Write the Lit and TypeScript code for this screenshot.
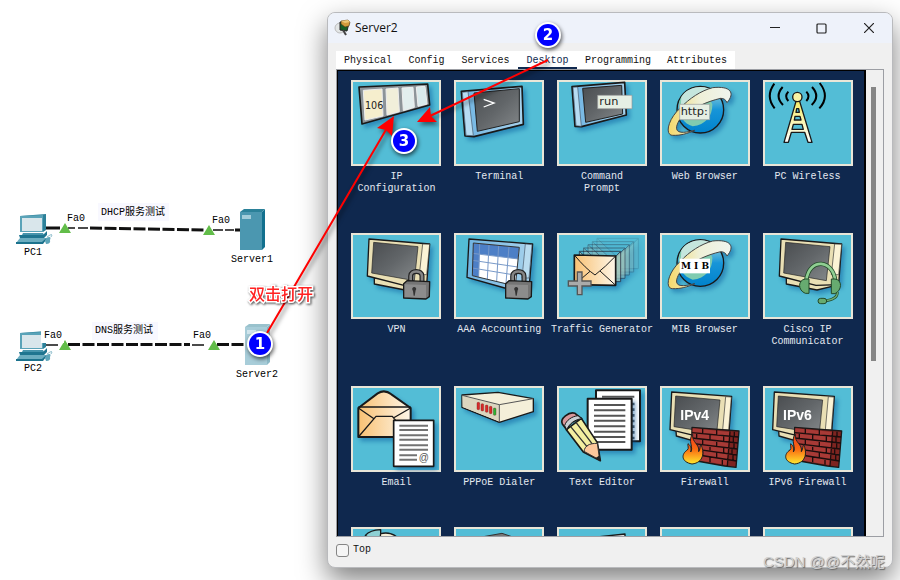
import { LitElement, html, svg, css, nothing } from "lit";
import { customElement, state } from "lit/decorators.js";
import { classMap } from "lit/directives/class-map.js";

type Art = ReturnType<typeof svg>;
interface App { name: string[]; box: string; art: Art | typeof nothing }

const monitorBeige = svg`
  <path class="ink w4 beige" d="M133 160 L133 178 L225 196 L270 185 L262 160Z"/>
  <path class="ink w4 beige" d="M117 43 L299 58 L290 180 L222 182 L112 154Z"/>
  <path fill="#fbf3d6" stroke="#333" stroke-width="2" d="M278 58 L299 59 L290 150 L268 150Z"/>
  <path fill="url(#screen)" stroke="#222" stroke-width="2" d="M131 53 L264 66 L253 168 L125 145Z"/>`;

const padlock = svg`
  <path fill="none" stroke="#222" stroke-width="15" d="M242 178 V154 C242 136 276 136 276 154 V178"/>
  <path fill="none" stroke="#858585" stroke-width="8" d="M242 178 V154 C242 136 276 136 276 154 V178"/>
  <path fill="#757575" class="ink w4" d="M221 177 L231 168 L299 171 L298 216 L288 223 L221 220Z"/>
  <path fill="#8c8c8c" d="M224 179 L288 181 L288 220 L224 217Z"/>
  <path fill="#333" d="M247 195 a6 6 0 1 1 10 2 l-3 16 l-3 0 l-2 -14z"/>`;

const planet = svg`
  <circle cx="463" cy="122" r="70" fill="url(#sea)" class="ink w4"/>
  <path fill="#7fcbb0" d="M410 78 C430 54 480 46 505 70 C490 78 492 95 499 105 C500 140 480 168 440 172 C400 160 385 110 410 78Z"/>
  <path fill="#dcefec" opacity=".75" d="M406 84 C425 50 480 46 500 66 C470 80 440 95 404 118Z"/>
  <path fill="url(#ring)" stroke="#444" stroke-width="3" stroke-linejoin="round" d="M402 118 C366 150 355 199 380 199 C402 200 425 194 446 184 C412 193 388 194 392 172 C398 152 404 148 412 142 C440 118 480 98 524 88 Q538 88 543 101 C568 72 555 50 500 56 C465 65 430 88 402 118Z"/>`;

const wall = (dx: number) => svg`<g transform=${`translate(${dx} 0)`}>
  <path fill="#7d2420" class="ink w4" d="M438 142 L579 153 L570 262 L536 258 L436 240Z"/>
  <path fill="#a83a36" d="M440 145 L552 156 L546 256 L438 238Z"/>
  <path fill="none" stroke="#1c0d0d" stroke-width="4" d="M438 158 L577 171 M438 174 L576 189 M438 190 L574 207 M438 206 L573 225 M438 222 L572 243 M552 154 L544 258 M470 146 V160 M512 150 V164 M452 160 V174 M492 164 V178 M533 167 V183 M470 178 V192 M512 182 V198 M492 197 V211 M533 202 V218 M470 210 V225 M512 216 V232 M492 230 V247 M529 236 V254 M565 155 V168 M562 172 V188 M564 190 V205 M558 208 V222 M561 226 V241"/>
  <path fill="url(#fire)" stroke="#222" stroke-width="3" d="M438 252 C405 246 405 222 424 210 C430 204 424 198 426 191 C436 198 436 208 434 216 C444 205 424 180 440 163 C437 188 462 192 458 215 C464 206 461 200 465 194 C475 216 474 248 438 252Z"/>
</g>`;

const firewall = (dx: number, label: string) => svg`<g class="cast">
  <g transform=${`translate(${dx} 0)`}>
    <path class="ink w4 beige" d="M390 150 L391 168 L440 182 L500 170Z"/>
    <path class="ink w4 beige" d="M377 36 L557 49 L548 170 L480 175 L372 149Z"/>
    <path fill="#fbf3d6" stroke="#333" stroke-width="2" d="M539 50 L556 51 L548 150 L530 150Z"/>
    <path fill="url(#screen)" stroke="#222" stroke-width="2" d="M389 48 L522 60 L512 160 L384 140Z"/>
    <text x="403" y="119" class="fw">${label}</text>
  </g></g>${wall(dx)}`;

const apps: App[] = [
  { name: ["IP", "Configuration"], box: "63 33 270 258", art: svg`
    <g class="cast"><path fill="#8d9499" class="ink w5" d="M87 54 L293 45 L299 108 L96 165Z"/>
    <path fill="#f6eecd" stroke="#eee" stroke-width="3" d="M100 64 L156 60 L159 141 L105 153Z"/>
    <path fill="#f1efda" stroke="#eee" stroke-width="3" d="M168 60 L204 57 L208 128 L171 138Z"/>
    <path fill="#e2eeee" stroke="#eee" stroke-width="3" d="M216 57 L249 55 L253 115 L220 125Z"/>
    <path fill="#d9eaec" stroke="#eee" stroke-width="3" d="M259 54 L285 52 L291 105 L264 112Z"/></g>
    <text x="105" y="121" class="num">106</text>` },
  { name: ["Terminal"], box: "372 33 270 258", art: svg`
    <g class="cast"><path fill="url(#steel)" class="ink w5" d="M394 67 L576 52 L580 166 L432 203 L405 201Z"/>
    <path fill="#b6dcf2" stroke="#456" stroke-width="2" d="M397 70 L414 68 L430 200 L408 199Z"/>
    <path fill="url(#screen)" stroke="#222" stroke-width="3" d="M432 72 L568 59 L568 158 L442 187Z"/></g>
    <path fill="none" stroke="#fff" stroke-width="4" d="M461 91 L492 102 L461 114"/>` },
  { name: ["Command", "Prompt"], box: "34 33 270 258", art: svg`
    <g class="cast"><path fill="url(#steel)" class="ink w5" d="M79 53 L237 40 L242 138 L108 173 L88 172Z"/>
    <path fill="#b6dcf2" stroke="#456" stroke-width="2" d="M82 55 L96 54 L107 172 L91 170Z"/>
    <path fill="url(#screen)" stroke="#222" stroke-width="3" d="M111 58 L228 49 L231 135 L120 160Z"/></g>
    <path fill="#e6efe4" stroke="#999" stroke-width="2" d="M156 79 H259 V119 H156Z"/>
    <text x="161" y="107" class="run">run</text>` },
  { name: ["Web Browser"], box: "342 33 270 258", art: svg`
    <g class="cast">${planet}</g>
    <path fill="#e6efe4" stroke="#999" stroke-width="2" d="M401 106 H491 V152 H401Z"/>
    <text x="404" y="137" class="run">http:</text>` },
  { name: ["PC Wireless"], box: "35 33 270 258", art: svg`
    <g fill="none" stroke="#000" stroke-width="6"><path d="M69 44 Q41 82 70 118 M94 54 Q69 82 95 108 M111 68 Q98 82 111 96 M205 42 Q237 82 204 118 M182 54 Q208 82 181 108 M165 68 Q178 82 165 96"/></g>
    <path fill="url(#mast)" fill-rule="evenodd" class="ink w4" d="M134 97 H145 L182 220 H170 L160 190 H120 L111 220 H98Z M136 119 L134 130 H144 L142 119Z M131 142 L129 153 H149 L146 142Z M126 166 L122 181 H156 L152 166Z"/>
    <circle cx="138" cy="84" r="14" fill="#f8f3a4" class="ink w4"/>` },
  { name: ["VPN"], box: "63 25 270 258", art: svg`<g class="cast">${monitorBeige}</g>${padlock}` },
  { name: ["AAA Accounting"], box: "372 25 270 258", art: svg`
    <g class="cast"><path fill="url(#steel)" class="ink w4" d="M417 43 L608 58 L598 182 L524 190 L411 158Z"/>
    <path fill="#b9dcf0" stroke="#456" stroke-width="2" d="M586 58 L606 60 L597 160 L576 160Z"/></g>
    <path fill="#fff" d="M430 55 L568 68 L556 182 L427 153Z"/>
    <path fill="#4d7fc6" d="M430 55 L568 68 L563 103 L449 88 L446 157 L427 153Z"/>
    <path fill="none" stroke="#7899c8" stroke-width="3" d="M427 86 L566 103 M427 107 L563 127 M427 130 L560 152 M449 57 L446 157 M477 60 L472 163 M506 62 L500 169 M537 65 L528 175"/>
    <path fill="none" stroke="#333" stroke-width="3" d="M430 55 L568 68 L556 184 L427 153Z"/>
    <g transform="translate(306 0)">${padlock}</g>` },
  { name: ["Traffic Generator"], box: "34 25 270 258", art: svg`
    <g class="cast">
    ${[[68, -50, .15], [54, -40, .25], [41, -31, .38], [28, -21, .5], [15, -11, .7]].map(([x, y, o]) => svg`<path opacity=${o} fill="#a9cabc" stroke="#223" stroke-width="3" transform=${`translate(${x} ${y})`} d="M86 91 H210 V182 H86Z M86 91 L150 151 L210 91"/>`)}
    <path fill="url(#paper)" class="ink w5" d="M86 91 L210 94 V182 L86 180Z"/>
    <path fill="none" class="ink w3" d="M86 91 Q120 132 148 151 Q180 126 210 94 M86 180 L133 140 M210 182 L163 139"/></g>
    <path fill="#aaa" stroke="#555" stroke-width="4" d="M95 142 H109 V169 H136 V184 H109 V210 H95 V184 H68 V169 H95Z"/>` },
  { name: ["MIB Browser"], box: "342 25 270 258", art: svg`
    <g class="cast"><g transform="translate(0 -7)">${planet}</g></g>
    <path fill="#fff" d="M401 102 H492 V146 H401Z"/><text x="405" y="132" class="mib">M I B</text>` },
  { name: ["Cisco IP", "Communicator"], box: "651 25 270 258", art: svg`
    <g class="cast"><g transform="translate(588 0)">${monitorBeige}</g></g>
    <path fill="none" stroke="#234a2a" stroke-width="13" d="M781 166 C790 98 862 104 868 170"/>
    <path fill="none" stroke="#8fce92" stroke-width="8" d="M781 166 C790 98 862 104 868 170"/>
    <path fill="none" stroke="#234a2a" stroke-width="8" d="M874 202 Q876 225 832 229"/>
    <path fill="none" stroke="#6cae72" stroke-width="4" d="M874 202 Q876 225 832 229"/>
    <g fill="#67ab70" stroke="#234a2a" stroke-width="3"><path d="M778 163 C755 166 755 197 778 206 H789 V163Z M867 163 C890 166 888 197 867 207 H856 V163Z"/><rect x="816" y="221" width="26" height="16" rx="8"/></g>` },
  { name: ["Email"], box: "63 18 270 258", art: svg`
    <g class="cast"><path fill="url(#paper)" class="ink w6" d="M85 84 L143 40 Q164 27 184 43 L242 84 V171 H85Z"/>
    <path fill="none" class="ink w4" d="M85 81 H242 M85 84 L133 117 M242 84 L190 114 M85 171 L138 109 H187 L200 125"/></g>
    <g class="cast"><path fill="#fff" class="ink w5" d="M191 121 H311 V259 H191Z"/></g>
    <path fill="none" stroke="#737373" stroke-width="6" d="M208 137 H294 M208 150 H294 M208 166 H294 M208 179 H294 M208 196 H294 M208 209 H294 M208 226 H261 M208 239 H261"/>
    <text x="266" y="242" class="at">@</text>` },
  { name: ["PPPoE Dialer"], box: "372 18 270 258", art: svg`
    <g class="cast"><path fill="#f4efd9" class="ink w4" d="M396 45 L504 37 L610 56 L610 95 L508 127 L396 82Z"/>
    <path fill="#dcd6bf" d="M397 48 L508 74 L507 124 L398 81Z"/>
    <path fill="none" stroke="#555" stroke-width="3" d="M396 46 L508 74 L610 56 M508 74 V127"/></g>
    <g stroke="#6b1616" stroke-width="1" fill="#d82a2a"><rect x="441" y="67" width="8" height="22" rx="3"/><rect x="453" y="71" width="8" height="22" rx="3"/><rect x="466" y="75" width="8" height="22" rx="3"/><rect x="478" y="79" width="8" height="22" rx="3"/><rect x="490" y="84" width="8" height="22" rx="3" fill="#2cb534"/></g>` },
  { name: ["Text Editor"], box: "34 18 270 258", art: svg`
    <g class="cast"><path fill="#fff" class="ink w6" d="M151 31 H283 V184 H151Z"/>
    <path fill="none" stroke="#555" stroke-width="6" d="M169 50 H266"/><path fill="none" stroke="#555" stroke-width="7" stroke-dasharray="8 9" d="M263 68 V180"/></g>
    <g class="cast"><path fill="#fff" class="ink w6" d="M126 56 H258 V209 H126Z"/></g>
    <path fill="none" stroke="#555" stroke-width="6" d="M145 75 H239 M145 91 H239 M145 107 H239 M145 122 H239 M145 139 H239 M145 155 H239 M145 171 H239 M145 186 H239"/>
    <path fill="#f3eea0" class="ink w5" d="M62 149 L107 115 L155 188 L164 242 L113 216Z"/>
    <path fill="#fcc79c" stroke="#333" stroke-width="3" d="M115 214 C118 197 130 190 155 190 L162 240Z"/>
    <path fill="#222" d="M149 235 L162 226 L165 244Z"/>
    <path fill="none" stroke="#333" stroke-width="4" d="M75 140 L124 200 M91 127 L139 191"/>
    <path fill="#d9989b" class="ink w5" d="M50 132 C42 116 70 94 88 100 L108 116 C85 119 70 133 63 149Z"/>
    <path fill="#c9cfd3" class="ink w3" d="M57 137 C61 121 79 109 97 107 L108 116 C85 119 70 133 63 149Z"/>` },
  { name: ["Firewall"], box: "342 18 270 258", art: firewall(0, "IPv4") },
  { name: ["IPv6 Firewall"], box: "651 18 270 258", art: firewall(308, "IPv6") },
  { name: [], box: "93 35 270 258", art: svg`
    <path fill="#8dd0d4" class="ink w4" d="M136 60 Q150 44 182 43 V64 L150 70Z"/>
    <path fill="#f4efd9" class="ink w4" d="M182 55 Q210 48 232 66 L180 70Z"/>` },
  { name: [], box: "401 35 270 258", art: svg`<path fill="#777" stroke="#333" stroke-width="3" d="M478 66 L545 54 L580 66Z"/>` },
  { name: [], box: "709 35 270 258", art: svg`<path fill="#ddd" class="ink w4" d="M809 67 L913 56 V70Z"/>` },
  { name: [], box: "0 0 270 258", art: nothing },
  { name: [], box: "0 0 270 258", art: nothing },
];

const pc = (x: number, y: number) => svg`<g transform=${`translate(${x} ${y})`}>
  <path fill="#2d8199" d="M4 2 L30 0 V16 L27 18 H4Z"/><path fill="#5aa3b8" d="M4 2 L27 1 V18 H4Z"/>
  <path fill="#d9e6eb" d="M6 4 H26 V17 H6Z"/>
  <path fill="#4694ac" d="M7 19 H27 L29 23 H5Z"/><path fill="#1f7590" d="M3 21 H27 L31 17 V21 L28 24 H4Z"/>
  <path fill="#6badc0" d="M4 24 H30 L26 29 H0Z"/><path fill="#1b728d" d="M0 28 H26 L30 24 V26 L27 30 H0Z"/>
  <path fill="#5ca5b9" d="M30 24 Q36 21 34 26 Q35 30 30 30 L29 27Z"/><path fill="none" stroke="#8bbccb" d="M31 23 Q38 18 35 23"/>
</g>`;

const server = (x: number, y: number, faded: boolean) => svg`<g transform=${`translate(${x} ${y})`} opacity=${faded ? .48 : 1}>
  <path fill="#4b97b0" d="M0 3 H22 V41 H0Z"/><path fill="#12708e" d="M22 3 L25 0 V38 L22 41Z"/>
  <path fill="#2b8199" d="M0 3 L4 0 H25 L22 3Z"/><path fill="#a3cdda" d="M2 6 H11 V10 H2Z"/></g>`;

const flag = (x: number, y: number) => svg`<path fill="#62bd49" d=${`M${x} ${y} l6 10 h-12z`}/>`;

const badge = (x: number, y: number, n: number) => svg`<g class="badge">
  <circle cx=${x} cy=${y} r="13" fill="#fff"/><circle cx=${x} cy=${y} r="11" fill="#00f"/>
  <text x=${x} y=${y + 5} text-anchor="middle">${n}</text></g>`;

@customElement("app-root")
export class AppRoot extends LitElement {
  @state() private tab = "Desktop";
  @state() private onTop = false;

  static styles = css`
    :host { display: block; position: relative; height: 100vh; overflow: hidden; background: #fff;
      font: 10px/12px "Liberation Mono", "Noto Sans CJK SC", monospace; color: #111; }
    * { box-sizing: border-box; }
    button { font: inherit; color: inherit; border: 0; padding: 0; background: none; }
    .layout { display: grid; grid-template-columns: 327px minmax(0, 1fr); height: 100%; padding: 12px 7px 12px 0; }
    .window { display: flex; flex-direction: column; min-height: 0; background: #f0f0f0; border-radius: 8px;
      border: 1px solid #b9babd; grid-column: 2; box-shadow: 0 12px 28px rgba(0, 0, 0, .5); overflow: hidden; }
    .titlebar { display: flex; align-items: center; height: 30px; flex: none; padding-left: 6px; background: #eef2fa; }
    .titlebar h1 { margin: 0 auto 0 3px; font: 12px/16px "Open Sans", sans-serif; }
    .control { width: 47px; height: 28px; display: grid; place-items: center; }
    .tabs { display: grid; grid-template-columns: 64fr 53fr 65fr 59fr 82fr 76fr; width: 399px; height: 18px; flex: none;
      margin: 8px 0 0 8px; background: #fff; }
    .tab { border-bottom: 3px solid transparent; padding-top: 4px; white-space: nowrap; }
    .active { border-color: #10294f; color: #10294f; }
    .panel { flex: 1; min-height: 0; display: flex; margin: 0 8px; border: 1px solid #9c9ea4; }
    .apps { flex: 1; overflow: hidden; display: grid; grid-template-columns: repeat(5, 1fr); row-gap: 38px; align-content: start;
      padding: 9px 5px 0 7px; background: #0f284e; border: solid #000; border-width: 1px 2px 0 1px; }
    .app { display: flex; flex-direction: column; align-items: center; gap: 5px; color: #e4e9f0; white-space: nowrap; }
    .tile { width: 90px; height: 86px; background: #53bdd6; border: 2px solid #e9e6d8; }
    .tile svg { display: block; width: 90px; height: 86px; margin: -2px; }
    .track { width: 17px; padding: 17px 6px 0 5px; }
    .thumb { width: 5px; height: 61%; background: #868686; }
    .footer { display: flex; align-items: center; gap: 4px; height: 30px; flex: none; padding: 0 8px 4px; }
    .footer input { appearance: none; width: 13px; height: 13px; margin: 0; border: 1px solid #858585; border-radius: 3px; background: #f5f5f5; }
    .footer input:checked { background: #10294f; }
    .canvas, .notes { position: absolute; inset: 0 auto auto 0; width: 900px; height: 580px; }
    .canvas, .notes { pointer-events: none; }
    .defs { position: absolute; width: 0; height: 0; }
    .ink { stroke: #191919; stroke-linejoin: round; }
    .w3 { stroke-width: 3px; } .w4 { stroke-width: 4px; } .w5 { stroke-width: 5px; } .w6 { stroke-width: 6px; }
    .beige { fill: #e9dfb4; }
    .cast { filter: drop-shadow(9px 10px 7px rgba(0, 80, 150, .45)); }
    .num { font: 32px "DejaVu Sans Condensed", "Open Sans", sans-serif; fill: #222; }
    .run { font: 34px "DejaVu Sans", sans-serif; fill: #222; }
    .mib { font: bold 27px "DejaVu Serif", serif; }
    .fw { font: bold 42px "Liberation Sans", sans-serif; fill: #fff; }
    .at { font: 30px "Liberation Sans", sans-serif; fill: #555; }
    .badge { filter: drop-shadow(1px 2px 2px rgba(0, 0, 0, .65)); }
    .badge text { font: bold 15px "DejaVu Sans", sans-serif; fill: #fff; }
    .arrow { filter: drop-shadow(2px 3px 2px rgba(0, 0, 0, .5)); }
    .hint { font: 500 16px "Noto Sans CJK SC", sans-serif; fill: #f22; stroke: #fff; stroke-width: 3px; paint-order: stroke;
      filter: drop-shadow(1px 1px 1px rgba(0, 0, 0, .7)); }
    .mark { position: absolute; right: 15px; bottom: 7px; margin: 0; font: 15px/22px "Liberation Sans", "Noto Sans CJK SC", sans-serif;
      color: #d0d0d0; text-shadow: 1px 1px 1px #666; }
  `;

  private canvas() {
    return html`<svg class="canvas" viewBox="0 0 900 580">
      <g fill="none" stroke="#111">
        <path stroke-width="3" d="M46 228 H60 M235 230 H241"/>
        <path stroke-width="1.5" d="M68 228 H75 M78 228 H88 M213 230 H223 M225 230 H234"/>
        <path stroke-width="3" stroke-dasharray="12 2.5" d="M90 228 L204 230"/>
        <path stroke-width="1.5" d="M46 345 H58 M192 345 H204"/>
        <path stroke-width="3" stroke-dasharray="12 2.5" d="M68 344.500 H190 M217 344.500 H246"/>
      </g>
      ${pc(16, 214)}${pc(16, 331)}${server(240, 209, false)}${server(245, 324, true)}
      ${flag(65, 223)}${flag(209, 225)}${flag(65, 340)}${flag(214, 340)}
      <path fill="#f8f8ff" d="M98 203 H169 V221 H98Z M92 322 H158 V340 H92Z"/>
      <path fill="#fff" d="M41 328 H64 V343 H41Z"/>
      <text x="101" y="215">DHCP服务测试</text><text x="95" y="333">DNS服务测试</text>
      <text x="67" y="221">Fa0</text><text x="212" y="223">Fa0</text>
      <text x="44" y="338">Fa0</text><text x="193" y="338">Fa0</text>
      <g text-anchor="middle"><text x="33" y="255">PC1</text><text x="252" y="262">Server1</text>
      <text x="33" y="371">PC2</text><text x="257" y="377">Server2</text></g>
    </svg>`;
  }

  private notes() {
    return html`<svg class="notes" viewBox="0 0 900 580">
      <g class="arrow"><path stroke="#f00" stroke-width="2" d="M267 333 L387 128 M548 60 L430 116"/>
        <path fill="#f00" d="M394 116 L392 136 L386 130 L377 128Z M417 122 L430 107 L431 116 L437 122Z"/></g>
      <text x="249" y="300" class="hint">双击打开</text>
      ${badge(260, 344, 1)}${badge(548, 35, 2)}${badge(404, 141, 3)}
    </svg>`;
  }

  render() {
    const tabs = ["Physical", "Config", "Services", "Desktop", "Programming", "Attributes"];
    return html`
      <svg class="defs" aria-hidden="true"><defs>
        <linearGradient id="screen" x2="1" y2="1"><stop stop-color="#4a4d50"/><stop offset=".5" stop-color="#626669"/><stop offset="1" stop-color="#85898b"/></linearGradient>
        <linearGradient id="steel"><stop stop-color="#6fb4e2"/><stop offset="1" stop-color="#a7d2ec"/></linearGradient>
        <linearGradient id="paper"><stop stop-color="#f9c173"/><stop offset="1" stop-color="#fdf6e8"/></linearGradient>
        <linearGradient id="sea" x2="0" y2="1"><stop stop-color="#b6e3dc"/><stop offset=".5" stop-color="#1795d8"/><stop offset="1" stop-color="#0082cc"/></linearGradient>
        <linearGradient id="ring"><stop stop-color="#f6d868"/><stop offset=".5" stop-color="#eef0d8"/><stop offset="1" stop-color="#f0f5ee"/></linearGradient>
        <linearGradient id="mast" x2="0" y2="1"><stop stop-color="#f6ec68"/><stop offset="1" stop-color="#fff"/></linearGradient>
        <linearGradient id="fire" x2="0" y2="1"><stop stop-color="#f23a1c"/><stop offset=".5" stop-color="#f96a12"/><stop offset="1" stop-color="#ffe92e"/></linearGradient>
      </defs></svg>
      <main class="layout">
        <section class="window" aria-label="Server2">
          <header class="titlebar">
            <svg width="18" height="18" viewBox="0 0 18 18" aria-hidden="true">
              <circle cx="6" cy="9" r="5" fill="#e3e6e6" stroke="#bbb"/>
              <path fill="#175f24" stroke="#222" d="M6 3 L15 4 L13 12 L6 11Z"/>
              <path fill="#d39b3c" stroke="#4d3513" stroke-width=".6" d="M7 2 L14 1 L16 3 L15 7 L11 8 L7 5Z"/>
              <path fill="#ecc877" d="M7 2 L14 1 L16 3 L11 4Z"/><path stroke="#444" stroke-width="2" d="M9 11 L12 16"/>
            </svg>
            <h1>Server2</h1>
            <button class="control" aria-label="Minimize"><svg width="10" height="10"><path stroke="#222" d="M0 4.500 H10"/></svg></button>
            <button class="control" aria-label="Maximize"><svg width="11" height="11"><rect x="1" y="1" width="9" height="9" rx="1" fill="none" stroke="#222" stroke-width="1.200"/></svg></button>
            <button class="control" aria-label="Close"><svg width="10" height="10"><path stroke="#222" stroke-width="1.200" d="M0 0 L10 10 M10 0 L0 10"/></svg></button>
          </header>
          <nav class="tabs" role="tablist">
            ${tabs.map((t) => html`<button role="tab" aria-selected=${t === this.tab} class=${classMap({ tab: true, active: t === this.tab })}
              @click=${() => (this.tab = t)}>${t}</button>`)}
          </nav>
          <div class="panel">
            <div class="apps">
              ${apps.map((a) => html`<button class="app">
                <span class="tile"><svg viewBox=${a.box} preserveAspectRatio="none" aria-hidden="true">${a.art}</svg></span>
                <span>${a.name.map((l, i) => html`${i ? html`<br />` : nothing}${l}`)}</span>
              </button>`)}
            </div>
            <div class="track"><div class="thumb"></div></div>
          </div>
          <footer class="footer">
            <input id="top" type="checkbox" .checked=${this.onTop} @change=${() => (this.onTop = !this.onTop)} />
            <label for="top">Top</label>
          </footer>
        </section>
      </main>
      ${this.canvas()}${this.notes()}
      <p class="mark">CSDN @@不然呢</p>`;
  }
}
